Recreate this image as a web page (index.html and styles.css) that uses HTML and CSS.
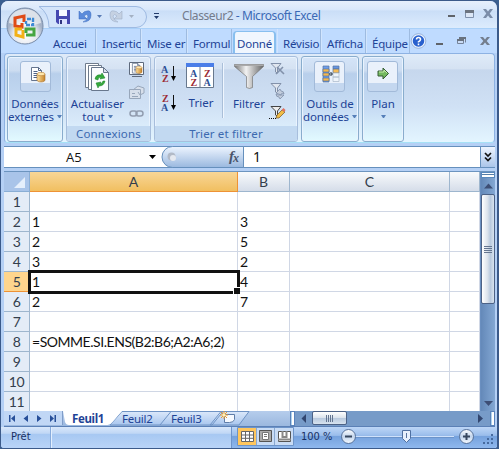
FILE: index.html
```html
<!DOCTYPE html>
<html lang="fr">
<head>
<meta charset="utf-8">
<title>Classeur2 - Microsoft Excel</title>
<link rel="stylesheet" href="styles.css">
</head>
<body>
<svg width="0" height="0" class="defs">
  <defs>
    <linearGradient id="metal" x1="0" x2="1"><stop offset="0" stop-color="#777"/><stop offset=".4" stop-color="#f2f2f2"/><stop offset="1" stop-color="#666"/></linearGradient>
    <linearGradient id="gold" x1="0" x2="1"><stop offset="0" stop-color="#ffe09a"/><stop offset="1" stop-color="#c5822a"/></linearGradient>
    <linearGradient id="round" x1="0" y1="0" x2="0" y2="1"><stop offset="0" stop-color="#fff"/><stop offset=".5" stop-color="#c3d5ec"/><stop offset="1" stop-color="#f4f9ff"/></linearGradient>
    <radialGradient id="orb" cy=".75"><stop offset="0" stop-color="#fff"/><stop offset=".65" stop-color="#e4e8f0"/><stop offset="1" stop-color="#a6b3c8"/></radialGradient>
    <linearGradient id="sheet" x1="0" y1="0" x2="0" y2="1"><stop offset="0" stop-color="#dbe8fa"/><stop offset="1" stop-color="#a9c6ee"/></linearGradient>
    <g id="cyl"><path d="M0 2v6c0 2.600 8 2.600 8 0V2z" fill="url(#gold)" stroke="#a8702c" stroke-width=".6"/><ellipse cx="4" cy="2" rx="4" ry="1.700" fill="#ffe7ad" stroke="#b8823c" stroke-width=".6"/></g>
    <g id="page"><path d="M.5.5h7l3 3v10H.5z" fill="#fff" stroke="#66758e"/><path d="M7.500.5v3h3M2.500 4.500h4M2.500 6.500h6M2.500 8.500h6M2.500 10.500h6" fill="none" stroke="#506487"/></g>
  </defs>
</svg>
<div class="window">
  <header class="title">
    <div class="quick">
      <svg width="164" height="29" viewBox="0 0 164 29">
        <path d="M43 6.500H136a10.500 10.500 0 0 1 0 21H49Q49 13 39 6.500z" fill="#d3e4fa" stroke="#9ebae2"/>
        <path d="M56 10h14v14H58l-2-2z" fill="#4648b0"/><path d="M59 10h8v6h-8z" fill="#f7f8ff"/><path d="M59 19h8v5h-8z" fill="#dbe2ff"/><path d="M60 20h2v4h-2z" fill="#30347f"/>
        <path d="M79 11v8h8l-3-3q3-3 4 0 0 4-5 6 8 0 8-7 0-5-4-4-3 0-5 3z" fill="#5b8bdb" stroke="#386abd" stroke-width=".5"/>
        <path d="M97 15h5l-2.500 3z" fill="#587bb5"/>
        <path d="M122 11v8h-8l3-3q-3-3-4 0 0 4 5 6-8 0-8-7 0-5 4-4 3 0 5 3z" fill="#c5d1e2" stroke="#9eafc8" stroke-width=".6"/>
        <path d="M129 15h5l-2.500 3z" fill="#a4b1c3"/><path d="M154 13h5v1h-5zM154 16h5l-2.500 3z" fill="#223b6b"/>
      </svg>
    </div>
    <div class="caption"><span class="doc">Classeur2</span> - Microsoft Excel</div>
    <svg class="winbtns" width="50" height="18" viewBox="0 0 50 18"><path d="M1 10h7v2H1z" fill="#5f6369"/><path d="M18.500 5.500h8v7h-8z" fill="#dce7f6" stroke="#7f91ac"/><path d="M18 5h9v3h-9z" fill="#6c7480"/><path d="M36 4h3l2 2.500L43 4h3l-3.300 4.500L46 13h-3l-2-2.500L39 13h-3l3.300-4.500z" fill="#7b8da9"/></svg>
  </header>
  <nav class="tabs">
    <div class="tab">Accuei</div><div class="tab">Insertic</div><div class="tab">Mise er</div><div class="tab">Formul</div><div class="tab active">Donné</div><div class="tab">Révisio</div><div class="tab">Afficha</div><div class="tab">Équipe</div>
    <svg width="88" height="24" viewBox="6 0 88 24"><circle cx="14.500" cy="12" r="6.500" fill="#2860ce" stroke="#e8f2ff" stroke-width="1.500"/><circle cx="14.500" cy="12" r="7.300" fill="none" stroke="#6482b4" stroke-width=".5"/><path d="M12.500 10.500q0-2 2-2t2 2q0 1-2 2.300v.7M14.500 14.500v1.700" fill="none" stroke="#fff" stroke-width="1.600"/><path d="M32 14h7v2h-7z" fill="#5f6369"/><path d="M55.500 8.500h6v5M53.500 10.500h6v4h-6z" fill="#cadcf6" stroke="#75849b"/><path d="M55 8h7v2h-7zM53 10h7v2h-7z" fill="#68727f"/><path d="M76 8h3l2 2.500L83 8h3l-3.300 4L86 16h-3l-2-2.500L79 16h-3l3.300-4z" fill="#747e8e"/></svg>
  </nav>
  <svg class="orb" width="38" height="38" viewBox="0 0 38 38"><circle cx="19" cy="19" r="18" fill="url(#orb)" stroke="#788ca9"/><path d="M3 16a16 14 0 0 1 32 0Q19 22 3 16" fill="#fff" opacity=".6"/><g fill="none"><path d="M18 15V9l-9 2v8l7 1v-4" stroke="#df4b16" stroke-width="3"/><path d="M21 12h6v6h-7v-4" stroke="#3d8bd5" stroke-width="2.400" stroke-dasharray="4 1"/><path d="M16 22h-6v6l7 2v-7" stroke="#f3b117" stroke-width="3"/><path d="M20 26v-4h8v6h-8" stroke="#46a642" stroke-width="3"/></g></svg>

  <section class="ribbon">
    <div class="group pop g1">
      <div class="tile"><svg width="32" height="30" viewBox="0 0 32 30"><use href="#page" x="10" y="5"/><use href="#cyl" x="16" y="10"/></svg></div>
      <div class="label"><div>Données</div><div>externes<i class="dd"></i></div></div>
    </div>
    <div class="group g2">
      <div class="body">
        <div class="big"><svg width="28" height="31" viewBox="0 0 28 31"><path d="M1.500 1.500h13v24h-13z" fill="#fff" stroke="#6e7b8c"/><path d="M4.500 3.500h13v24h-13z" fill="#fff" stroke="#6e7b8c"/><path d="M7.500 5.500h12l5 5v18h-17z" fill="#fafcff" stroke="#68778d"/><path d="M19.500 5.500v5h5z" fill="#d9e1ec" stroke="#68778d"/><path d="M11 17q1-5 6-4l1-2 3 5-5 1 1-2q-3 0-3 3zM21 19q-1 5-6 5l-1 2-2-5 5-1-1 2q2 0 3-3z" fill="#35a83c" stroke="#158126" stroke-width=".5"/></svg><div class="label"><div>Actualiser</div><div>tout<i class="dd"></i></div></div></div>
        <svg width="18" height="60" viewBox="0 0 18 60"><path d="M1.500 1.500h14v12h-14zM4 15.500h10" fill="#fff" stroke="#5e6a7c"/><use href="#page" transform="translate(4 2)scale(.75)"/><use href="#cyl" transform="translate(8 5)scale(.75)"/><path d="M1.500 28.500h11v9h-11zM5 29l5-4 6 2v5l-4 2-2-3" fill="#d7dfeb" stroke="#98a7bb"/><path d="M4 32.500h3M4 35.500h6" stroke="#98a7bb"/><g fill="none" stroke="#929db0" stroke-width="1.500"><rect x="2" y="50" width="7" height="5" rx="2.500"/><rect x="8" y="50" width="7" height="5" rx="2.500"/></g></svg>
      </div>
      <div class="foot">Connexions</div>
    </div>
    <div class="group g3">
      <div class="body">
        <svg width="19" height="62" viewBox="0 0 19 62" class="az"><text x="1" y="12" fill="#2c4f95">A</text><text x="2" y="21" fill="#9c2b35">Z</text><path d="M13.500 5v12" stroke="#111"/><path d="M11 15h5l-2.500 5z"/><text x="2" y="41" fill="#9c2b35">Z</text><text x="1" y="50" fill="#2c4f95">A</text><path d="M13.500 34v12" stroke="#111"/><path d="M11 44h5l-2.500 5z"/></svg>
        <div class="big sort"><svg width="30" height="30" viewBox="0 0 30 30" class="az"><path d="M1.500 2.500h27v24h-27zM15 6v20" fill="#fff" stroke="#68788d"/><path d="M1 2h28v4H1z" fill="#4b7ee8"/><text x="5" y="16" fill="#2c4f95">A</text><text x="5.500" y="25" fill="#9c2b35">Z</text><text x="19" y="16" fill="#9c2b35">Z</text><text x="18.500" y="25" fill="#2c4f95">A</text></svg><div class="label">Trier</div></div>
        <div class="rule"></div>
        <div class="big filter"><svg width="30" height="30" viewBox="0 0 30 30"><path d="M.5 2.500h29v2l-11 10v11q-3 2-6 0v-11l-12-10z" fill="url(#metal)" stroke="#777" stroke-width=".7"/><path d="M.5 2.500h29v1.500h-29z" fill="#aaa"/></svg><div class="label">Filtrer</div></div>
        <svg class="small" width="18" height="62" viewBox="0 0 18 62"><path d="M2 2.500h10L8.500 7v5l-2-1V7z" fill="#e0e6ef" stroke="#8291aa"/><path d="M8 6l7 7M14 6l-7 7" stroke="#8291aa" stroke-width="1.600"/><path d="M2 22.500h10L8.500 27v5l-2-1V27z" fill="#e0e6ef" stroke="#8291aa"/><path d="M7 32l4-4 1 2q3 0 3 3l-2-1-1 2zM15 34l-4 4-1-2q-3 0-3-3l2 1z" fill="#c3cddd" stroke="#8291aa" stroke-width=".8"/><path d="M2 45.500h10L8.500 50v5l-2-1V50z" fill="#eee" stroke="#444"/><path d="M7 57l1-3 5-5 3 2-6 6z" fill="#f1bd45" stroke="#74572e" stroke-width=".7"/><path d="M12.500 49l2-2 2 2-1 2z" fill="#e27361"/><path d="M0 57.500h8" stroke="#111" stroke-dasharray="1 1"/></svg>
      </div>
      <div class="foot">Trier et filtrer</div>
    </div>
    <div class="group pop g4">
      <div class="tile"><svg width="32" height="30" viewBox="0 0 32 30"><g stroke="#56749f" stroke-width=".7"><path d="M8 4h6v16H8z" fill="#6e9de9"/><path d="M8 7h6v3H8zM8 11h6v3H8zM8 16h6v3H8z" fill="#f7b84d"/><path d="M18 4h6v3h-6z" fill="#6795e0"/><path d="M18 7h6v4h-6z" fill="#f5bb55"/><path d="M18 11h6v4h-6zM18 15h6v4.500h-6z" fill="#eef4fb" stroke="#a9b7c9"/></g><path d="M14 12h3M15.500 10l2 2-2 2" fill="none" stroke="#234" /></svg></div>
      <div class="label"><div>Outils de</div><div>données<i class="dd"></i></div></div>
    </div>
    <div class="group pop g5">
      <div class="tile"><svg width="32" height="30" viewBox="0 0 32 30"><path d="M10 9h5V6l5.500 5.500L15 17v-3h-5z" fill="#75b961" stroke="#365c35"/><path d="M11 10h5V8l3 3" fill="none" stroke="#c8edac"/></svg></div>
      <div class="label"><div>Plan</div><div><i class="dd"></i></div></div>
    </div>
  </section>

  <section class="formula">
    <div class="namebox">A5</div>
    <svg class="fxbar" width="96" height="22" viewBox="0 0 96 22"><defs><linearGradient id="fb" x1="0" y1="0" x2="0" y2="1"><stop offset="0" stop-color="#eef5ff"/><stop offset="1" stop-color="#99b8df"/></linearGradient></defs><path d="M1 9h7l-3.500 4z"/><path d="M95.500 .5H24.500a10.500 10.500 0 0 0 0 21h71z" fill="url(#fb)" stroke="#6690bd"/><circle cx="23.500" cy="10.500" r="4" fill="#b2bac7"/><circle cx="25" cy="12" r="3" fill="#e5e9f0"/><text x="81" y="15" class="fx">f<tspan class="fxx" dx="-1" dy="1">x</tspan></text></svg>
    <div class="entry">1</div>
    <div class="expand"><svg width="14" height="20" viewBox="0 0 14 20"><path d="M4 6l3 3 3-3M4 10.500l3 3 3-3" fill="none" stroke="#111" stroke-width="1.700"/></svg></div>
  </section>

  <main class="work">
    <div class="grid">
      <div class="corner"><svg width="25" height="19" viewBox="0 0 25 19"><path d="M21 5v11H10z" fill="#e5effc"/></svg></div><div class="col sel">A</div><div class="col">B</div><div class="col">C</div><div class="col"></div>
      <div class="row">1</div><div></div><div></div><div></div><div></div>
      <div class="row">2</div><div>1</div><div>3</div><div></div><div></div>
      <div class="row">3</div><div>2</div><div>5</div><div></div><div></div>
      <div class="row">4</div><div>3</div><div>2</div><div></div><div></div>
      <div class="row cur">5</div><div class="cell-active">1</div><div>4</div><div></div><div></div>
      <div class="row">6</div><div>2</div><div>7</div><div></div><div></div>
      <div class="row">7</div><div></div><div></div><div></div><div></div>
      <div class="row">8</div><div><span class="f">=SOMME.SI.ENS(B2:B6;A2:A6;2)</span></div><div></div><div></div><div></div>
      <div class="row">9</div><div></div><div></div><div></div><div></div>
      <div class="row">10</div><div></div><div></div><div></div><div></div>
      <div class="row">11</div><div></div><div></div><div></div><div></div>
    </div>
    <div class="vscroll"><div class="split"></div><svg width="14" height="16"><path d="M3 10.500h9L7.500 5.500z" fill="#3d4e75"/></svg><div class="vthumb"><i></i><i></i><i></i><i></i></div><div class="grow"></div><svg width="14" height="15"><path d="M3 5h9L7.500 10z" fill="#3d4e75"/></svg></div>
  </main>

  <div class="bottom">
    <div class="sheets">
      <svg class="sheetbg" width="286" height="15" viewBox="0 0 286 15"><path d="M0 0h58v14H0z" fill="#c1d7f5"/><path d="M58.500 0v14" stroke="#7f9dc9"/><path d="M106 14L118 .5h101L208 14zM156 14L167 .5M206 14L217 .5h28L235 14z" fill="url(#sheet)" stroke="#6f93c4"/><path d="M59 0h59l-9.500 11q-2 3-5 3H65q-3 0-4-3z" fill="#fff"/><g fill="#274f99"><path d="M5 4h1.500v7H5zM11 4v7L7 7.500zM24 4v7l-4.500-3.500zM33 4v7l4.500-3.500zM46 4v7l4-3.500zM50.500 4H52v7h-1.500z"/></g><path d="M220.500 3.500h10v5q-1 3-5 3h-5z" fill="#f5f9ff" stroke="#5f7da8"/><path d="M220 0v8M216 4h8M217 1l6 6M223 1l-6 6" stroke="#ee9b29"/><circle cx="220" cy="4" r="1.500" fill="#fff2b8"/></svg>
      <span class="s1">Feuil1</span><span class="s2">Feuil2</span><span class="s3">Feuil3</span>
    </div>
    <div class="hscroll"><div class="grip"></div><svg width="17" height="14"><path d="M11 3v9L6.500 7.500z" fill="#32466f"/></svg><div class="hthumb"><i></i><i></i><i></i><i></i></div><div class="grow"></div><svg width="17" height="14"><path d="M5 3v9l5-4.500z" fill="#32466f"/></svg><div class="grip"></div></div>
  </div>

  <footer class="status">
    <div class="ready">Prêt</div><div class="space"></div>
    <div class="tools">
    <svg class="views" width="57" height="20" viewBox="0 0 57 20"><path d="M.5.500h56v18H.5z" fill="#c9dcf5" stroke="#6d94c9"/><path d="M1 1h18v17H1z" fill="#ffc65d"/><path d="M19.500 1v17M37.500 1v17" stroke="#8aa9d2"/><path d="M4.500 4.500h12v10h-12zM4.500 8h12M4.500 11.300h12M8.500 5v10M12.500 5v10" fill="#fff" stroke="#666"/><path d="M22.500 3.500h12v11h-12z" fill="#aaa" stroke="#555"/><path d="M25.500 5.500h6v7h-6z" fill="#fff" stroke="#777"/><path d="M27 7.500h3M27 9.500h3" stroke="#777"/><path d="M41.500 4.500h12v10h-12z" fill="#fff" stroke="#555"/><path d="M45.500 4v6h4V4M41 12.500h13" fill="none" stroke="#888" stroke-width="2"/></svg>
    <div class="pct">100 %</div>
    <svg width="161" height="21" viewBox="0 0 161 21"><path d="M18 9.500h101" stroke="#cfe1fa"/><path d="M18 10.500h101" stroke="#668cc2" opacity=".7"/><circle cx="13.500" cy="9.500" r="7" fill="url(#round)" stroke="#536f99"/><path d="M10 9.500h7" stroke="#38485f" stroke-width="2"/><path d="M67.500 3.500h8v8l-4 4-4-4z" fill="#e7f0fd" stroke="#4f70a1"/><path d="M71.500 6v5" stroke="#5874a0"/><circle cx="131.500" cy="9.500" r="7" fill="url(#round)" stroke="#536f99"/><path d="M128 9.500h7M131.500 6v7" stroke="#38485f" stroke-width="2"/><path d="M156 7h2v2h-2zM152 11h2v2h-2zM156 11h2v2h-2zM148 15h2v2h-2zM152 15h2v2h-2zM156 15h2v2h-2z" fill="#476b9f"/></svg>
    </div>
  </footer>
</div>
</body>
</html>
```
FILE: styles.css
```css
* { box-sizing: border-box; }
html, body { margin: 0; height: 100%; overflow: hidden; }
body { background: #3b6091; font-family: "Noto Sans", "Open Sans", sans-serif; color: #1e4396; }
.defs { position: absolute; }
svg { display: block; flex: none; }
.window { position: relative; width: 499px; height: 449px; border: 1px solid #3b5a8a; border-right-width: 2px; border-radius: 8px 8px 4px 4px; display: flex; flex-direction: column; background: #b5d0f5; }
.title { height: 28px; display: flex; border-radius: 7px 7px 0 0; background: linear-gradient(#e6effc 0, #d9e8fb 30%, #cadef7 36%, #dcebfd 95%, #a9d0f8 96%); }
.quick { width: 181px; overflow: hidden; }
.quick svg { margin-top: -1px; margin-left: -1px; }
.caption { flex: 1; padding-top: 6px; font-size: 12px; line-height: 18px; letter-spacing: -.42px; color: #3b69b5; white-space: nowrap; }
.doc { color: #737b8c; }
.winbtns { margin: 4px 0 0; }
.tabs { height: 24px; display: grid; grid-template-columns: 43px 45px 46px 45px 45px 44px 45px 44px 88px; background: #bfdbff; padding-left: 52px; font-size: 11.5px; line-height: 16px; letter-spacing: -.2px; }
.tab { padding: 7px 0 0 5px; border-right: 1px solid #9ebbe0; border-left: 1px solid #d1e5fe; white-space: nowrap; }
.tab:first-child { padding-left: 0; border-left: 0; }
.tab.active { margin: 2px 1px 0; padding: 4px 0 0 2px; border: 2px solid #88bfef; border-width: 1px 2px 0; border-radius: 4px 4px 0 0; background: #f0f6fe; }
.orb { position: absolute; left: 5px; top: 6px; }
.ribbon { height: 90px; margin: 0 2px 0 3px; padding: 3px 2px; display: flex; gap: 3px; border: 1px solid #8db2e3; border-radius: 4px; background: linear-gradient(#dfebf9 0, #d5e2f2 17%, #c6d7ed 18%, #d0e1f5 60%, #e3f5ff 100%); border-bottom-color: #a6e1f6; }
.group { height: 86px; margin-top: -1px; border: 1px solid #a7bedc; border-radius: 3px; box-shadow: inset 0 0 0 1px #e9f3fe; overflow: hidden; font-size: 11.5px; line-height: 13px; }
.pop { background: linear-gradient(#d4e4f8 0, #cdddf1 16%, #b8cfeb 20%, #c9def5 65%, #e2faff 100%); border-color: #89adcd; }
.g1 { width: 56px; } .g2 { width: 85px; } .g3 { width: 144px; } .g4 { width: 58px; } .g5 { width: 42px; }
.tile { width: 31px; height: 31px; margin: 4px auto 0; border: 1px solid #a2bad9; border-radius: 3px; background: linear-gradient(#eaf1fb 0 73%, #c4d7ef 74%); overflow: hidden; }
.g4 .tile { margin-left: 12px; } .g5 .tile { margin-left: 4px; }
.label { margin-top: 5px; text-align: center; white-space: nowrap; }
.label div { height: 13px; display: flex; justify-content: center; align-items: center; gap: 3px; }
.g1 .label, .g4 .label { letter-spacing: -.1px; }
.dd { display: block; width: 5px; border: 2.5px solid transparent; border-top: 3px solid #557fb9; border-bottom: 0; }
.body { height: 69px; display: flex; }
.big { flex: none; }
.big svg { margin: 5px auto 0; }
.g2 .big { width: 61px; }
.g2 .label { margin-top: 4px; }
.g2 .body > svg { margin-top: 4px; }
.foot { height: 16px; background: #c2d9f1; color: #3c69af; text-align: center; line-height: 15px; letter-spacing: .15px; }
.az { font: bold 10px "Liberation Serif", serif; }
.g3 .az { margin-top: 4px; margin-left: 5px; }
.g3 .body > .small { margin: 4px 0 0 3px; }
.sort { width: 42px; margin-left: 1px; }
.rule { width: 2px; height: 55px; margin: 6px 8px 0 0; background: #aabfd9; border-right: 1px solid #eff6ff; }
.filter { width: 34px; }
.formula { height: 22px; margin: 3px 2px 0 3px; display: flex; background: #fff; border: 1px solid #6690bd; border-width: 1px 0; line-height: 20px; color: #111; }
.namebox { width: 144px; padding-left: 62px; font-family: "Open Sans", sans-serif; font-size: 13px; }
.fxbar { margin-top: -1px; margin-right: 3px; }
.fx { font: italic bold 15px "Liberation Serif", serif; fill: #49546a; }
.fxx { font-size: 12px; }
.entry { flex: 1; padding-left: 6px; font-size: 14px; }
.expand { width: 15px; border-left: 1px solid #6690bd; background: linear-gradient(#edf4fe, #aac5ea); }
.work { height: 240px; margin: 3px 2px 0 3px; display: flex; border-top: 1px solid #6c94bf; background: #fff; }
.grid { width: 476px; display: grid; grid-template-columns: 26px 208px 52px 160px 30px; grid-template-rows: 20px repeat(11, 20px); font-family: Lato, sans-serif; font-size: 14px; line-height: 20px; color: #111; overflow: hidden; }
.grid > div { border: 1px solid #d0d7e5; border-width: 0 1px 1px 0; padding-left: 2px; white-space: nowrap; }
.f { letter-spacing: -.46px; }
.grid > .corner { padding: 0; background: #a9c4e9; border-color: #8aaed5; }
.grid > .col { padding: 0; text-align: center; background: linear-gradient(#f8fafc, #d5dde9); border-color: #9eb6ce; color: #333e4d; }
.grid > .sel { background: linear-gradient(#f8d697, #f1bf60); border-color: #ee9235; }
.grid > .row { padding: 0; text-align: center; background: #e4ecf7; border-color: #9eb6ce; color: #333e4d; letter-spacing: -.4px; }
.grid > .cur { background: #ffd58d; border-color: #ee9235; }
.grid > .cell-active { position: relative; outline: 3px solid #111; outline-offset: -1px; border-color: #fff; z-index: 1; }
.cell-active::after { content: ""; position: absolute; right: -3px; bottom: -3px; width: 6px; height: 6px; background: #111; border: 1px solid #fff; border-width: 1px 0 0 1px; }
.vscroll { width: 15px; display: flex; flex-direction: column; background: linear-gradient(90deg, #6489b9, #83a7d3); border-left: 1px solid #6a8fc0; }
.split { height: 6px; border: 1px solid #5989bd; background: linear-gradient(#fff 1px, #557da8 1px 2px, #fff 2px); }
.vthumb { height: 110px; border: 1px solid #4d6286; border-radius: 2px; background: linear-gradient(90deg, #fff, #dce3ec 45%, #b8c9de 70%, #d8e3ef); display: flex; flex-direction: column; justify-content: center; align-items: center; gap: 1px; }
.vthumb i { width: 8px; height: 1px; background: #647590; }
.grow { flex: 1; }
.bottom { height: 16px; margin: 0 2px 0 3px; display: flex; background: #8baed9; border-bottom: 1px solid #5b80b6; }
.sheets { position: relative; width: 286px; display: flex; font-size: 11.5px; line-height: 15px; letter-spacing: -.25px; background: linear-gradient(#b6cdec, #9bb8df); }
.sheetbg { position: absolute; left: 0; top: 0; }
.sheets span { position: relative; width: 49px; }
.sheets .s1 { margin-left: 68px; width: 50px; font-weight: bold; letter-spacing: -.35px; }
.hscroll { flex: 1; display: flex; background: #779bc8; }
.grip { width: 5px; background: #fff; border: 1px solid #5a83bb; box-shadow: inset 1px 0 #afd3ef; }
.hthumb { width: 35px; height: 14px; border: 1px solid #4d6286; border-radius: 2px; background: linear-gradient(#fff, #dae2ec 50%, #b8c9de 51%, #d8e3ef); display: flex; gap: 1px; justify-content: center; align-items: center; }
.hthumb i { width: 1px; height: 7px; background: #647590; }
.status { height: 21px; display: flex; background: linear-gradient(#d8e7fb 0, #c0d7f5 30%, #a7c8f2 35%, #b9d4f8 100%); border-radius: 0 0 3px 3px; font: 11px "DejaVu Sans Condensed", "DejaVu Sans", sans-serif; line-height: 20px; color: #183064; overflow: hidden; }
.ready { width: 50px; padding-left: 10px; border-right: 1px solid #87abdc; box-shadow: 1px 0 #e3effe; }
.space { width: 181px; border-right: 1px solid #6e94ca; }
.tools { flex: 1; padding-left: 5px; display: flex; background: linear-gradient(#bdd6f7 0, #9abdeb 40%, #76a2dd 45%, #8fb8ee 100%); }
.pct { width: 41px; padding-left: 7px; white-space: nowrap; }
```
